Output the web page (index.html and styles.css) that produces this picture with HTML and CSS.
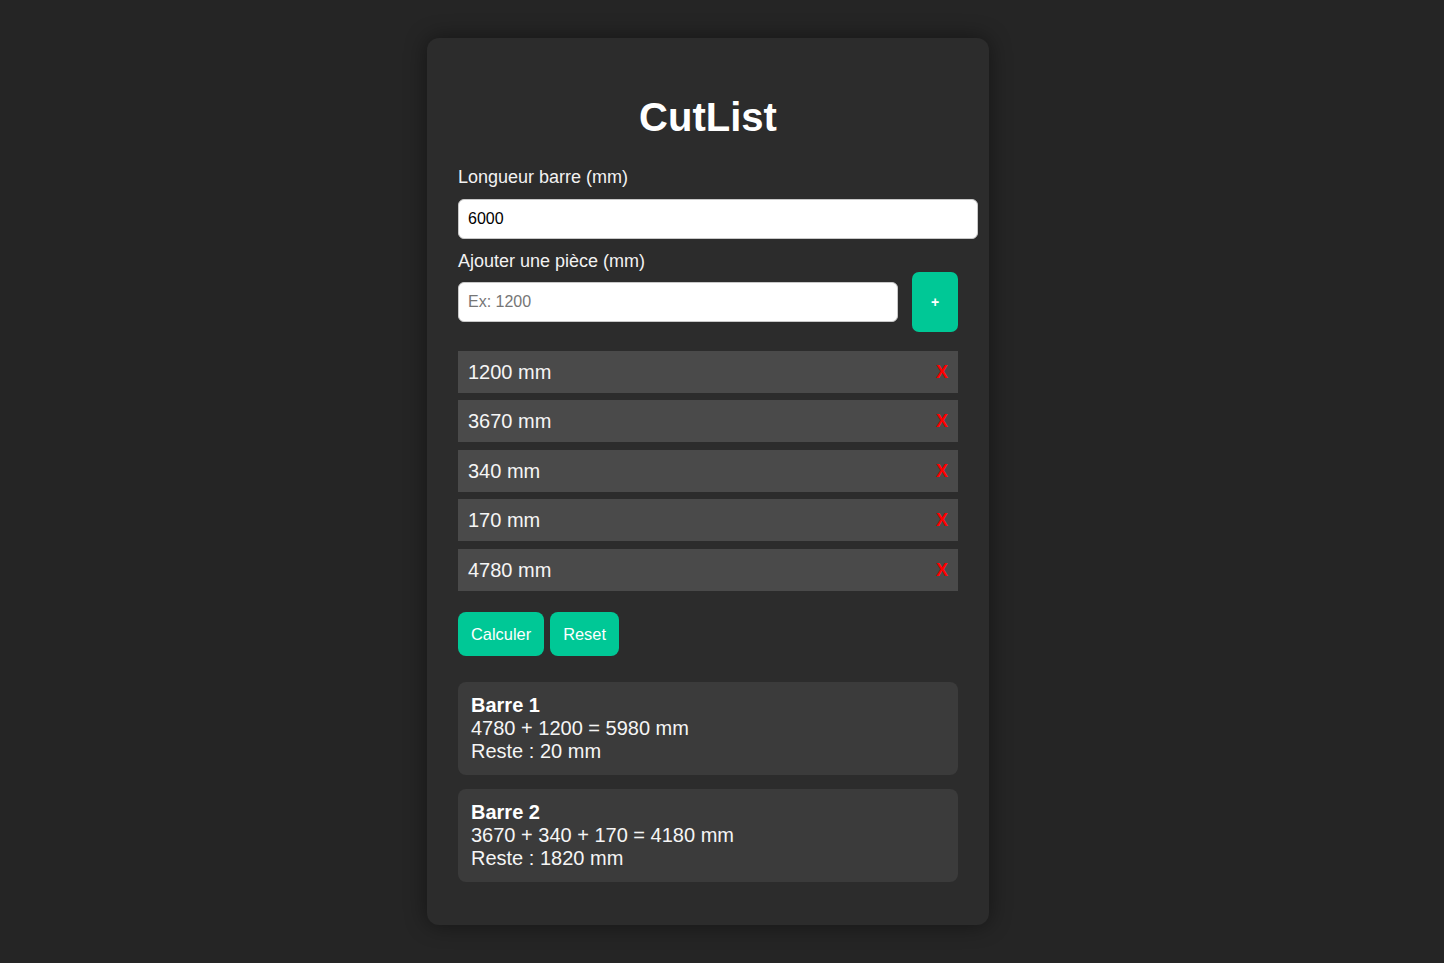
FILE: index.html
```html
<!DOCTYPE html>
<html lang="fr">
<head>
<meta charset="utf-8">
<title>CutList</title>
<link rel="stylesheet" href="styles.css">
</head>
<body>
<main class="card">
  <h1 class="title">CutList</h1>
  <label class="label" for="bar">Longueur barre (mm)</label>
  <input class="input input-bar" id="bar" type="number" value="6000">
  <label class="label" for="piece">Ajouter une pièce (mm)</label>
  <div class="add-row">
    <input class="input input-piece" id="piece" type="number" placeholder="Ex: 1200">
    <button class="btn-add" type="button">+</button>
  </div>
  <ul class="pieces">
    <li class="piece"><span>1200 mm</span><span class="del">X</span></li>
    <li class="piece"><span>3670 mm</span><span class="del">X</span></li>
    <li class="piece"><span>340 mm</span><span class="del">X</span></li>
    <li class="piece"><span>170 mm</span><span class="del">X</span></li>
    <li class="piece"><span>4780 mm</span><span class="del">X</span></li>
  </ul>
  <div class="actions">
    <button class="btn" type="button">Calculer</button>
    <button class="btn" type="button">Reset</button>
  </div>
  <div class="results">
    <div class="result">
      <strong>Barre 1</strong><br>
      4780 + 1200 = 5980 mm<br>
      Reste : 20 mm
    </div>
    <div class="result">
      <strong>Barre 2</strong><br>
      3670 + 340 + 170 = 4180 mm<br>
      Reste : 1820 mm
    </div>
  </div>
</main>
</body>
</html>
```
FILE: styles.css
```css
* { box-sizing: border-box; }
html, body { margin: 0; padding: 0; }
body {
  background: #252525;
  font-family: "Liberation Sans", Arial, sans-serif;
  color: #f2f2f2;
  padding: 38px 28px 40px 0;
}
.card {
  width: 562px;
  margin: 0 auto;
  background: #2c2c2c;
  border-radius: 12px;
  padding: 31px 31px 30px;
  box-shadow: 0 0 22px rgba(0, 0, 0, 0.45);
}
.title {
  font-size: 40px;
  font-weight: bold;
  text-align: center;
  margin: 26px 0 27px;
  line-height: normal;
  color: #ffffff;
}
.label {
  display: block;
  font-size: 18px;
  line-height: normal;
  color: #f2f2f2;
}
.input {
  font-family: "Liberation Sans", Arial, sans-serif;
  font-size: 16px;
  line-height: normal;
  color: #000;
  background: #fff;
  border: 1px solid #c8c8c8;
  border-radius: 6px;
  padding: 10px 9px;
  outline: none;
  -moz-appearance: textfield;
}
.input::-webkit-outer-spin-button,
.input::-webkit-inner-spin-button { -webkit-appearance: none; margin: 0; }
.input::placeholder { color: #767676; }
.input-bar {
  display: block;
  box-sizing: content-box;
  width: 500px;
  margin: 10.5px 0 12.2px;
}
.add-row {
  display: flex;
  align-items: center;
  gap: 14px;
  height: 60px;
}
.input-piece {
  flex: 1 1 auto;
  min-width: 0;
  height: 40px;
}
.btn-add {
  flex: 0 0 46px;
  width: 46px;
  height: 60px;
  border: none;
  border-radius: 7px;
  background: #00c896;
  color: #fff;
  font-family: "Liberation Sans", Arial, sans-serif;
  font-size: 14px;
  font-weight: bold;
  padding: 0;
}
.pieces {
  list-style: none;
  margin: 19px 0 0;
  padding: 0;
}
.piece {
  display: flex;
  justify-content: space-between;
  align-items: center;
  background: #4a4a4a;
  padding: 10px;
  margin-bottom: 7.2px;
  font-size: 20px;
  line-height: 22.3px;
  color: #f5f5f5;
}
.del {
  color: #ff0000;
  font-weight: bold;
  font-size: 18px;
}
.actions {
  display: flex;
  gap: 6px;
  margin-top: 21px;
}
.btn {
  background: #00c896;
  color: #fff;
  border: none;
  border-radius: 8px;
  font-family: "Liberation Sans", Arial, sans-serif;
  font-size: 16.4px;
  line-height: 18.4px;
  padding: 13px 13px;
}
.results {
  margin-top: 25.5px;
}
.result {
  background: #3b3b3b;
  border-radius: 8px;
  padding: 12px 13px;
  margin-bottom: 13.7px;
  font-size: 20px;
  line-height: normal;
  color: #f5f5f5;
}
.result strong { color: #fff; }
```
